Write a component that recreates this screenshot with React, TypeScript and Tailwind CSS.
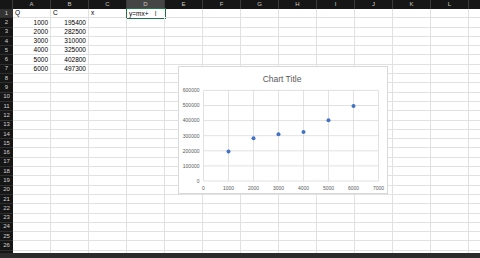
import React from 'react'

const cols = ['A', 'B', 'C', 'D', 'E', 'F', 'G', 'H', 'I', 'J', 'K', 'L', '']

const data: Record<number, string[]> = {
  1: ['Q', 'C', 'x'],
  2: ['1000', '195400'],
  3: ['2000', '282500'],
  4: ['3000', '310000'],
  5: ['4000', '325000'],
  6: ['5000', '402800'],
  7: ['6000', '497300'],
}

const points: [number, number][] = [
  [1000, 195400],
  [2000, 282500],
  [3000, 310000],
  [4000, 325000],
  [5000, 402800],
  [6000, 497300],
]

// chart coords (relative to chart box)
const px = (v: number) => 24.5 + (v / 1000) * 25
const py = (v: number) => 114 - (v / 100000) * 15.1

function Chart() {
  return (
    <div className="absolute left-[178px] top-[66px] w-[210px] h-[128px] bg-white border border-[#d9d9d9]">
      <svg width="210" height="128" viewBox="0 0 210 128" className="block">
        <text x="103" y="14.5" textAnchor="middle" fontSize="8.5" fill="#595959" fontFamily="Liberation Sans, Arial, sans-serif">
          Chart Title
        </text>
        {[0, 1, 2, 3, 4, 5, 6].map((i) => (
          <line key={'h' + i} x1={px(0)} x2={px(7000)} y1={py(i * 100000)} y2={py(i * 100000)} stroke="#d9d9d9" strokeWidth="0.8" />
        ))}
        {[0, 1, 2, 3, 4, 5, 6, 7].map((i) => (
          <line key={'v' + i} x1={px(i * 1000)} x2={px(i * 1000)} y1={py(600000)} y2={py(0)} stroke="#d9d9d9" strokeWidth="0.8" />
        ))}
        {[0, 1, 2, 3, 4, 5, 6].map((i) => (
          <text key={'yl' + i} x="20.5" y={py(i * 100000) + 1.8} textAnchor="end" fontSize="5" fill="#595959" fontFamily="Liberation Sans, Arial, sans-serif">
            {i * 100000}
          </text>
        ))}
        {[0, 1, 2, 3, 4, 5, 6, 7].map((i) => (
          <text key={'xl' + i} x={px(i * 1000)} y="122.5" textAnchor="middle" fontSize="5" fill="#595959" fontFamily="Liberation Sans, Arial, sans-serif">
            {i * 1000}
          </text>
        ))}
        {points.map(([x, y]) => (
          <circle key={x} cx={px(x)} cy={py(y)} r="2" fill="#4472c4" />
        ))}
      </svg>
    </div>
  )
}

export default function App() {
  const rows = Array.from({ length: 26 }, (_, i) => i + 1)
  return (
    <div className="relative w-[480px] h-[258px] overflow-hidden bg-white font-['Liberation_Sans',Arial,sans-serif] text-[6.5px] text-black">
      <div className="flex flex-col h-full">
        {/* column headers */}
        <div className="flex h-[9px] shrink-0 bg-[#161616]">
          <div className="w-[13px] shrink-0 border-r border-[#3a3a3a]" />
          {cols.map((c, i) => (
            <div
              key={i}
              className={`w-[38px] shrink-0 flex items-center justify-center border-r border-[#3a3a3a] text-[#c8c8c8] text-[6px] ${c === 'D' ? 'bg-[#454545]' : ''}`}
            >
              {c}
            </div>
          ))}
        </div>

        {rows.map((r) => (
          <div key={r} className="flex h-[9.3px] shrink-0">
            <div
              className={`w-[13px] shrink-0 flex items-center justify-center text-[6px] text-[#d0d0d0] border-b border-[#2e2e2e] ${r === 1 ? 'bg-[#333333]' : 'bg-[#161616]'}`}
            >
              {r}
            </div>
            {cols.map((c, ci) => {
              const v = data[r]?.[ci]
              const isNum = v !== undefined && /^\d+$/.test(v)
              const active = r === 1 && c === 'D'
              return (
                <div
                  key={ci}
                  className={`relative w-[38px] shrink-0 flex items-center px-[2px] border-r border-b border-[#e1e1e1] ${isNum ? 'justify-end' : 'justify-start'}`}
                >
                  {v}
                  {active && (
                    <div className="absolute -left-[1px] -top-[1px] w-[40px] h-[11px] border-[1.5px] border-[#1e7145] flex items-center px-[2px] bg-white">
                      <span>y=mx+</span>
                      <span className="ml-[6px] text-[#555] text-[8px] leading-none">I</span>
                    </div>
                  )}
                </div>
              )
            })}
          </div>
        ))}

        <div className="flex flex-1">
          <div className="w-[13px] shrink-0 bg-[#161616]" />
          {cols.map((c, i) => (
            <div key={i} className="w-[38px] shrink-0 border-r border-[#e1e1e1]" />
          ))}
        </div>
        <div className="h-[5px] shrink-0 bg-[#2b2b2b]" />
      </div>

      <Chart />
    </div>
  )
}
